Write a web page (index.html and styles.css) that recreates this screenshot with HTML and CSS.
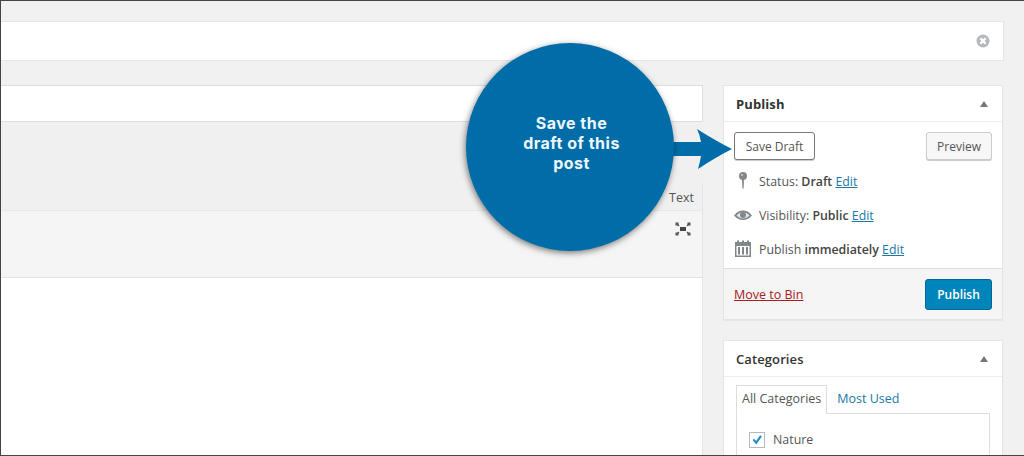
FILE: index.html
```html
<!DOCTYPE html>
<html lang="en">
<head>
<meta charset="utf-8">
<title>Edit Post</title>
<link rel="stylesheet" href="styles.css">
</head>
<body>
<div class="page">
  <div class="notice">
    <svg class="notice-x" width="14" height="14" viewBox="0 0 14 14"><circle cx="7" cy="7" r="6.5" fill="#b4b9be"/><path d="M4.4 4.4l5.2 5.2M9.6 4.4l-5.2 5.2" stroke="#fff" stroke-width="2.2"/></svg>
  </div>
  <div class="columns">
    <main class="main">
      <div class="title-box"></div>
      <div class="editor-head">
        <div class="tab-row"><span class="tab-text">Text</span></div>
      </div>
      <div class="toolbar">
        <svg width="16" height="14" viewBox="0 0 16 14"><rect x="5" y="5" width="6" height="4" fill="#444"/><path d="M4 4L2 2M12 4l2-2M4 10l-2 2M12 10l2 2" stroke="#555" stroke-width="1.2"/><rect x="0.5" y="0.5" width="3" height="3" fill="#555"/><rect x="12.5" y="0.5" width="3" height="3" fill="#555"/><rect x="0.5" y="10.5" width="3" height="3" fill="#555"/><rect x="12.5" y="10.5" width="3" height="3" fill="#555"/></svg>
      </div>
      <div class="editor-body"></div>
    </main>
    <aside class="side">
      <section class="box">
        <header class="box-head"><h2 class="box-title bold">Publish</h2><span class="arrow-up"></span></header>
        <div class="box-body">
          <div class="btn-row">
            <span class="btn btn-save">Save Draft</span>
            <span class="btn btn-preview">Preview</span>
          </div>
          <div class="meta-row meta-first">
            <svg class="meta-icon" width="20" height="20" viewBox="0 0 20 20"><circle cx="10" cy="5" r="4" fill="#82878c"/><circle cx="9" cy="4" r="1.1" fill="#c8cacc"/><path d="M9 8h2l-.4 9.500h-1.200z" fill="#82878c"/></svg>
            <span>Status: <b>Draft</b> <a class="link">Edit</a></span>
          </div>
          <div class="meta-row">
            <svg class="meta-icon" width="20" height="20" viewBox="0 0 20 20"><path d="M1 10.500C4 6.500 7 5.500 10 5.500s6 1 9 5c-3 3.500-6 4.500-9 4.500s-6-1-9-4.500z" fill="#82878c"/><path d="M3.500 10.500C5.500 8 8 7.200 10 7.200s4.500.8 6.500 3.300C14.500 12.600 12 13.500 10 13.500s-4.500-.9-6.500-3z" fill="#e4e5e6"/><circle cx="10" cy="10" r="3" fill="#82878c"/></svg>
            <span>Visibility: <b>Public</b> <a class="link">Edit</a></span>
          </div>
          <div class="meta-row">
            <svg class="meta-icon" width="20" height="20" viewBox="0 0 20 20"><path d="M2 3h16v15H2z" fill="#82878c"/><rect x="3.500" y="7" width="13" height="9.500" fill="#fff"/><path d="M6 8v7.500M10 8v7.500M14 8v7.500" stroke="#82878c" stroke-width="2"/><path d="M5 1.500v3M10 1.500v3M15 1.500v3" stroke="#82878c" stroke-width="2"/></svg>
            <span>Publish <b>immediately</b> <a class="link">Edit</a></span>
          </div>
        </div>
        <footer class="box-foot">
          <a class="trash">Move to Bin</a>
          <span class="btn-primary">Publish</span>
        </footer>
      </section>
      <section class="box box-cat">
        <header class="box-head"><h2 class="box-title">Categories</h2><span class="arrow-up"></span></header>
        <div class="cat-body">
          <div class="cat-tabs">
            <span class="cat-tab active">All Categories</span>
            <span class="cat-tab">Most Used</span>
          </div>
          <div class="cat-panel">
            <label class="cat-item">
              <span class="check"><svg width="16" height="16" viewBox="0 0 16 16"><path d="M3 8l1.500-1.500L7 9l4.500-6.500L13.500 4 7.200 13z" fill="#1e8cbe"/></svg></span>
              Nature
            </label>
          </div>
        </div>
      </section>
    </aside>
  </div>
  <div class="callout">
    <svg class="callout-arrow" width="72" height="48" viewBox="0 0 72 48"><path d="M0 16H35Q34 9 31 3 50 15 66 23 50 31 32 43 34 36 35 30H0z" fill="#006da8"/></svg>
    <div class="circle"><p class="circle-text">Save the<br>draft of this<br>post</p></div>
  </div>
</div>
</body>
</html>
```
FILE: styles.css
```css
* { box-sizing: border-box; }
html, body { margin: 0; padding: 0; }
body { background: #f1f1f1; }
.page {
  position: relative;
  width: 1024px;
  height: 456px;
  overflow: hidden;
  background: #f1f1f1;
  border: 1px solid #444;
  border-right: 0;
  font-family: "Open Sans", "Liberation Sans", sans-serif;
  font-size: 13px;
  color: #444;
  padding: 20px 20px 0 0;
}
.notice {
  height: 40px;
  background: #fff;
  border: 1px solid #e5e5e5;
  border-left: 0;
  display: flex;
  align-items: center;
  justify-content: flex-end;
  padding-right: 13px;
}
.columns {
  display: flex;
  align-items: flex-start;
  gap: 20px;
  margin-top: 24px;
}
.main { width: 702px; flex: none; }
.title-box {
  height: 37px;
  background: #fff;
  border: 1px solid #ddd;
  border-left: 0;
}
.editor-head {
  height: 89px;
  background: #f0f0f0;
  display: flex;
  flex-direction: column;
  justify-content: flex-end;
}
.tab-row {
  height: 28px;
  background: #f0f0f0;
  display: flex;
  justify-content: flex-end;
  align-items: center;
  padding: 2px 8px 0 0;
  border-right: 1px solid #e5e5e5;
  border-bottom: 1px solid #e8e8e8;
}
.tab-text { color: #555; font-size: 12.5px; }
.toolbar {
  height: 67px;
  background: #f5f5f5;
  border-right: 1px solid #e5e5e5;
  border-bottom: 1px solid #e2e2e2;
  display: flex;
  justify-content: flex-end;
  align-items: flex-start;
  padding: 11px 11px 0 0;
}
.editor-body { height: 180px; background: #fff; border-right: 1px solid #e5e5e5; }
.side { width: 280px; flex: none; }
.box { background: #fff; border: 1px solid #e5e5e5; box-shadow: 0 1px 1px rgba(0,0,0,.04); }
.box-cat { margin-top: 20px; }
.box-head {
  height: 36px;
  display: flex;
  align-items: center;
  justify-content: space-between;
  padding: 0 14px 0 12px;
  border-bottom: 1px solid #eee;
}
.box-title { margin: 0; font-size: 13px; font-weight: 600; color: #333; letter-spacing: .1px; }
.box-title.bold { font-weight: 700; }
.arrow-up { width: 0; height: 0; border: 4px solid transparent; border-top: 0; border-bottom: 6px solid #72777c; }
.box-body { height: 146px; padding: 10px 10px 0; }
.btn-row { display: flex; justify-content: space-between; }
.btn {
  height: 28px;
  display: flex;
  align-items: center;
  justify-content: center;
  border-radius: 3px;
  font-size: 12px;
  color: #555;
}
.btn-save { width: 81px; background: #fff; border: 1px solid #777; box-shadow: 0 1px 0 #ccc; }
.btn-preview { width: 66px; background: #f7f7f7; border: 1px solid #ccc; box-shadow: 0 1px 0 #ccc; }
.meta-row { display: flex; align-items: center; gap: 6px; height: 34px; font-size: 12.35px; color: #555; }
.meta-first { margin-top: 4px; }
.meta-icon { flex: none; margin-left: -1px; }
.meta-row b { font-weight: 600; color: #444; }
.link { color: #1a78a8; text-decoration: underline; }
.box-foot {
  height: 51px;
  background: #f5f5f5;
  border-top: 1px solid #ddd;
  display: flex;
  align-items: center;
  justify-content: space-between;
  padding: 0 10px;
}
.trash { color: #a82020; text-decoration: underline; font-size: 12.5px; }
.btn-primary {
  width: 67px;
  height: 31px;
  display: flex;
  align-items: center;
  justify-content: center;
  background: #0085ba;
  border: 1px solid #006799;
  border-radius: 3px;
  color: #fff;
  font-size: 12px;
  font-weight: 600;
}
.cat-body { padding: 8px 12px 0; }
.cat-tabs { display: flex; height: 28px; }
.cat-tab { padding: 5px 6px; font-size: 12.5px; color: #1a78a8; margin-right: 4px; }
.cat-tab.active { color: #555; border: 1px solid #ddd; border-bottom: 1px solid #fff; position: relative; z-index: 1; height: 29px; padding: 4px 5px; }
.cat-panel { height: 80px; border: 1px solid #ddd; padding: 17px 12px; }
.cat-item { display: flex; align-items: center; gap: 8px; font-size: 12.4px; color: #555; }
.check { width: 16px; height: 16px; border: 1px solid #b4b9be; display: flex; align-items: center; justify-content: center; }
.callout { position: absolute; left: 465px; top: 42px; width: 270px; height: 210px; }
.circle {
  position: absolute;
  left: 0;
  top: 0;
  width: 208px;
  height: 208px;
  border-radius: 50%;
  background: #006da8;
  box-shadow: -1px 2px 6px rgba(0,0,0,.5);
  display: flex;
  align-items: flex-start;
  justify-content: center;
  padding-left: 3px;
}
.circle-text {
  margin: 70px 0 0;
  color: #eef7fb;
  font-family: Inter, "Liberation Sans", sans-serif;
  font-size: 16px;
  font-weight: 700;
  line-height: 20px;
  text-align: center;
  letter-spacing: .5px;
}
.callout-arrow { position: absolute; left: 200px; top: 83px; }
```
